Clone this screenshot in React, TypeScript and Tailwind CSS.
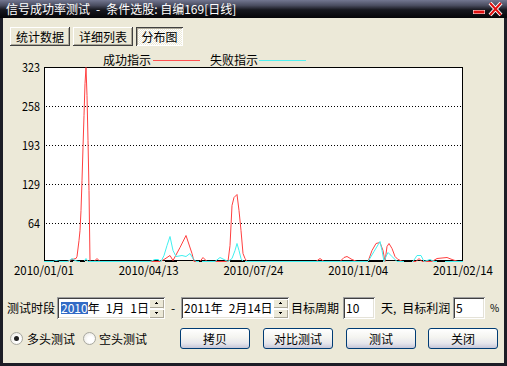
import React from "react";

const red = [
  [44, 261], [67, 261], [72, 259], [76, 258], [77, 256], [79, 240], [80, 230], [81, 210], [82, 180], [83, 147], [84, 115], [85, 83], [86, 67], [87, 95], [88, 140], [89, 190], [90, 261], [94, 261], [97, 258], [100, 261],
  [150, 261], [160, 261], [164, 259], [167, 257], [170, 255], [173, 260], [180, 247], [186, 235], [192, 253], [194, 261], [200, 261], [203, 257], [207, 261],
  [228, 261], [230, 245], [232, 205], [234, 197], [237, 194], [239, 210], [241, 230], [243, 253], [245, 258], [247, 261],
  [316, 261], [320, 258], [324, 261], [340, 261], [344, 257], [347, 256], [352, 259], [357, 261],
  [368, 261], [372, 250], [376, 243], [380, 242], [383, 250], [385, 261], [387, 246], [389, 243], [392, 248], [395, 256], [398, 259], [403, 261],
  [416, 261], [419, 258], [422, 261], [432, 261], [437, 258], [447, 257], [452, 259], [458, 261], [463, 261],
];

const cyan = [
  [44, 261], [53, 261], [56, 260], [60, 261], [68, 261], [72, 258], [75, 260], [78, 261], [84, 261], [86, 258], [88, 261],
  [150, 261], [155, 259], [158, 259], [161, 261], [164, 255], [167, 245], [170, 236], [173, 250], [176, 256], [182, 255], [186, 256], [190, 253], [193, 258], [196, 261],
  [215, 261], [220, 257], [224, 259], [228, 261], [232, 258], [235, 250], [237, 243], [239, 250], [241, 258], [243, 261],
  [368, 261], [374, 251], [380, 241], [382, 250], [384, 261], [386, 256], [388, 252], [392, 256], [397, 261],
  [413, 261], [417, 255], [421, 255], [424, 261], [430, 259], [434, 261], [463, 261],
];

const blackSegs = [
  [54, 59], [70, 73], [80, 85], [165, 177], [199, 202], [230, 245], [368, 383], [404, 412], [437, 445],
];

const pts = (a: number[][]) => a.map((p) => `${p[0]},${p[1] + 0.5}`).join(" ");

function Chart() {
  const grid = [106, 145, 184, 223];
  const yl: [string, number][] = [["323", 67], ["258", 106], ["193", 145], ["129", 184], ["64", 223]];
  const xl: [string, number][] = [["2010/01/01", 44], ["2010/04/13", 148.75], ["2010/07/24", 253.5], ["2010/11/04", 358.25], ["2011/02/14", 463]];
  const font = "'Noto Sans CJK SC', sans-serif";
  return (
    <svg width={501} height={234} viewBox="3 48 501 234" className="block">
      <text x={103} y={65} fontFamily={font} fontSize={12} fill="#000">成功指示</text>
      <line x1={153} y1={60.5} x2={200} y2={60.5} stroke="#ff5050" strokeWidth={1} />
      <text x={210} y={65} fontFamily={font} fontSize={12} fill="#000">失败指示</text>
      <line x1={259} y1={60.5} x2={306} y2={60.5} stroke="#4ff0f0" strokeWidth={1} />
      <rect x={44.5} y={67.5} width={418} height={193} fill="#fff" stroke="#000" strokeWidth={1} />
      {grid.map((g) => (
        <line key={g} x1={46} y1={g + 0.5} x2={462} y2={g + 0.5} stroke="#000" strokeWidth={1} strokeDasharray="1 2" />
      ))}
      {yl.map(([t, y]) => (
        <text key={t} x={40} y={y + 4.5} textAnchor="end" fontFamily={font} fontSize={12} fill="#000" textLength={t.length * 6} lengthAdjust="spacingAndGlyphs">{t}</text>
      ))}
      {xl.map(([t, x]) => (
        <text key={t} x={x} y={274.5} textAnchor="middle" fontFamily={font} fontSize={12} fill="#000" textLength={60} lengthAdjust="spacingAndGlyphs">{t}</text>
      ))}
      <polyline points={pts(red)} fill="none" stroke="#ff4040" strokeWidth={1} />
      <polyline points={pts(cyan)} fill="none" stroke="#40f0f0" strokeWidth={1} />
      {blackSegs.map(([a, b]) => (
        <line key={a} x1={a} y1={261.5} x2={b} y2={261.5} stroke="#000" strokeWidth={1} />
      ))}
    </svg>
  );
}

function Sunken({ className, children }: { className: string; children?: React.ReactNode }) {
  return (
    <div className={`bg-white shadow-[inset_1px_1px_#a0a0a0,inset_-1px_-1px_#fff,inset_2px_2px_#404040,inset_-2px_-2px_#e4e2d8] flex items-center ${className}`}>
      {children}
    </div>
  );
}

function Spin() {
  return (
    <div className="ml-auto mr-[1px] flex flex-col w-[16px] h-[19px] gap-[1px]">
      <div className="flex-1 bg-[#ECE9D8] shadow-[inset_1px_1px_#fff,inset_-1px_-1px_#aca899] flex items-center justify-center">
        <svg width="5" height="3"><path d="M2 0h1v1h1v1H1V1h1z" fill="#000" /></svg>
      </div>
      <div className="flex-1 bg-[#ECE9D8] shadow-[inset_1px_1px_#fff,inset_-1px_-1px_#aca899] flex items-center justify-center">
        <svg width="5" height="3"><path d="M1 0h3v1H3v1H2V1H1z" fill="#000" /></svg>
      </div>
    </div>
  );
}

function XPButton({ label, className }: { label: string; className: string }) {
  return (
    <div className={`h-[21px] rounded-[3px] border border-[#003c74] bg-[linear-gradient(to_bottom,#ffffff_0%,#f4f4f0_45%,#e6e6ec_75%,#c6c6d8_100%)] flex items-center justify-center text-[12px] ${className}`}>
      {label}
    </div>
  );
}

function Radio({ checked }: { checked?: boolean }) {
  return (
    <div className="w-[13px] h-[13px] rounded-full border border-[#a8a8a0] bg-[radial-gradient(circle_at_60%_60%,#ffffff_30%,#e4e2da_100%)] flex items-center justify-center">
      {checked && <div className="w-[5px] h-[5px] rounded-full bg-[#202020]" />}
    </div>
  );
}

export default function App() {
  return (
    <div className="w-[507px] h-[366px] flex flex-col font-['Noto_Sans_CJK_SC',sans-serif] text-[12px] leading-none text-black select-none">
      <div className="h-[18px] shrink-0 flex items-center bg-[linear-gradient(to_bottom,#727690_0%,#4a4d60_30%,#16171e_55%,#050507_100%)] text-white pl-[6px]">
        <span className="flex-1 whitespace-pre text-[12px]">{"信号成功率测试\u2002-\u2002条件选股: 自编169[日线]"}</span>
        <svg width="32" height="16" viewBox="0 0 32 16" className="mr-[3px]">
          <rect x="1" y="9" width="12" height="4" fill="#fff" />
          <rect x="1.5" y="9.5" width="11" height="3" fill="#e01010" />
          <path d="M18 2 L29 14 M29 2 L18 14" stroke="#fff" strokeWidth="4" />
          <path d="M18 2 L29 14 M29 2 L18 14" stroke="#e01010" strokeWidth="2" />
        </svg>
      </div>
      <div className="flex-1 bg-[#ECE9D8] border-x-[3px] border-b-[3px] border-[#1c1d26] flex flex-col">
        <div className="mt-[9px] pl-[7px] flex gap-[3px]">
          <div className="w-[60px] h-[19px] flex items-center justify-center shadow-[inset_-1px_-1px_#404040,inset_1px_1px_#fff,inset_-2px_-2px_#aca899]">统计数据</div>
          <div className="w-[60px] h-[19px] flex items-center justify-center shadow-[inset_-1px_-1px_#404040,inset_1px_1px_#fff,inset_-2px_-2px_#aca899]">详细列表</div>
          <div className="w-[47px] h-[19px] flex items-center justify-center bg-[repeating-conic-gradient(#ffffff_0%_25%,#ECE9D8_0%_50%)] bg-[length:2px_2px] shadow-[inset_1px_1px_#404040,inset_-1px_-1px_#fff,inset_2px_2px_#aca899]">分布图</div>
        </div>
        <div className="mt-[2px]">
          <Chart />
        </div>
        <div className="mt-[15px] h-[22px] flex items-center pl-[4px]">
          <span className="w-[48px]">测试时段</span>
          <Sunken className="ml-[2px] w-[108px] h-[22px] pl-[4px]">
            <span className="bg-[#316ac5] text-white">2010</span>
            <span className="whitespace-pre">{"年\u20021月\u20021日"}</span>
            <Spin />
          </Sunken>
          <span className="w-[16px] text-center">-</span>
          <Sunken className="w-[108px] h-[22px] pl-[3px]">
            <span className="whitespace-pre">{"2011年\u20022月14日"}</span>
            <Spin />
          </Sunken>
          <span className="ml-[2px] w-[48px]">目标周期</span>
          <Sunken className="ml-[4px] w-[32px] h-[22px] pl-[3px]">10</Sunken>
          <span className="ml-[6px] w-[68px] whitespace-pre">{"天,\u2002目标利润"}</span>
          <Sunken className="ml-[4px] w-[32px] h-[22px] pl-[3px]">5</Sunken>
          <span className="ml-[5px] text-[10px]">%</span>
        </div>
        <div className="mt-[9px] h-[21px] flex items-center pl-[7px]">
          <Radio checked />
          <span className="ml-[4px] w-[48px]">多头测试</span>
          <span className="ml-[8px]"><Radio /></span>
          <span className="ml-[3px] w-[48px]">空头测试</span>
          <XPButton label="拷贝" className="ml-[33px] w-[70px]" />
          <XPButton label="对比测试" className="ml-[13px] w-[70px]" />
          <XPButton label="测试" className="ml-[13px] w-[70px]" />
          <XPButton label="关闭" className="ml-[12px] w-[70px]" />
        </div>
      </div>
    </div>
  );
}
